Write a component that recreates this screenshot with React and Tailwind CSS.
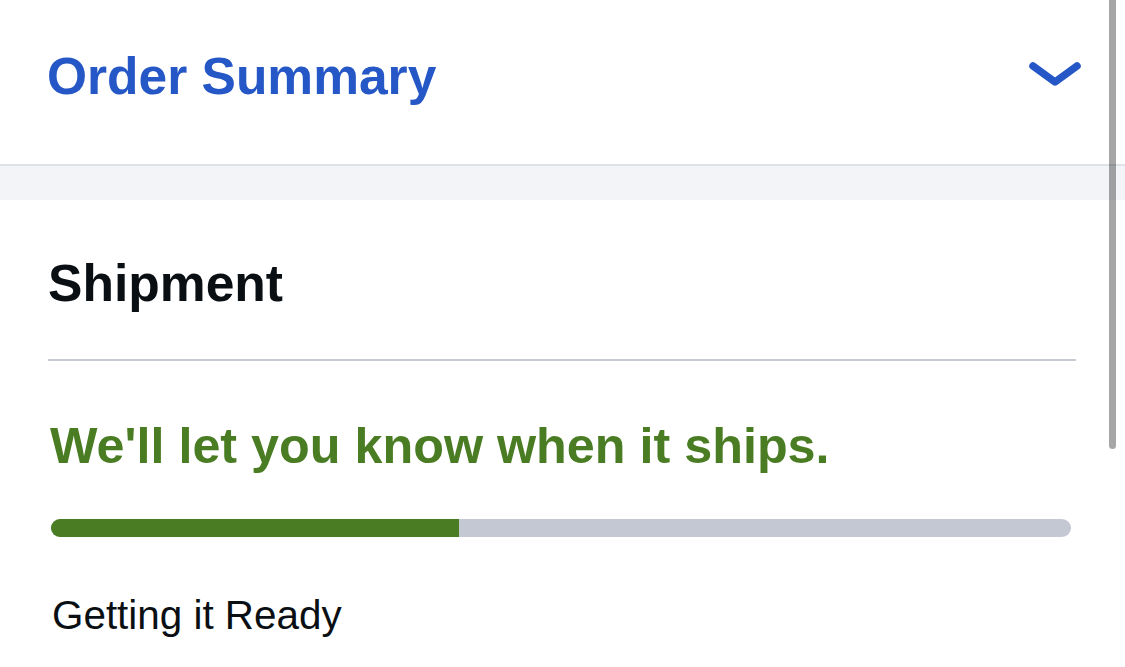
import React from 'react';

const font = { fontFamily: '"Liberation Sans", Arial, sans-serif' };

const Chevron = () => (
  <svg width="52" height="30" viewBox="0 0 52 30" fill="none">
    <path d="M4 5 L26 21 L48 5" stroke="#2557c6" strokeWidth="7.5" strokeLinecap="round" strokeLinejoin="round" />
  </svg>
);

const App = () => {
  const progress = 40;

  return (
    <div className="relative w-full min-h-screen bg-white overflow-hidden" style={font}>
      {/* Order Summary header */}
      <div className="h-[166px] flex items-center justify-between pl-[47px] pr-[44px] pb-[12px] border-b-2 border-[#dfe3e9]">
        <h2 className="text-[51.5px] leading-[51px] font-bold text-[#2557c6]">Order Summary</h2>
        <Chevron />
      </div>
      <div className="h-[34px] bg-[#f3f4f7]"></div>

      {/* Shipment */}
      <div className="pl-[48px] pr-[49px] pt-[58px]">
        <h3 className="text-[51.6px] leading-[50px] font-bold text-[#0a0f14]">Shipment</h3>
        <div className="mt-[51px] h-[2px] bg-[#c5cad3]"></div>

        <p className="mt-[60px] pl-[2px] text-[50.3px] leading-[50px] font-bold text-[#4a7d23]">
          We'll let you know when it ships.
        </p>

        <div className="mt-[48px] ml-[3px] mr-[5px] h-[18px] rounded-full bg-[#c4c8d2] overflow-hidden">
          <div className="h-full bg-[#4a7d23]" style={{ width: `${progress}%` }}></div>
        </div>

        <p className="mt-[58px] pl-[4px] text-[40.4px] leading-[40px] text-[#0a0f14]">Getting it Ready</p>
      </div>

      {/* overlay scrollbar */}
      <div className="absolute top-0 right-[9px] w-[7px] h-[449px] rounded-b-full bg-black/35"></div>
    </div>
  );
};

export default App;
